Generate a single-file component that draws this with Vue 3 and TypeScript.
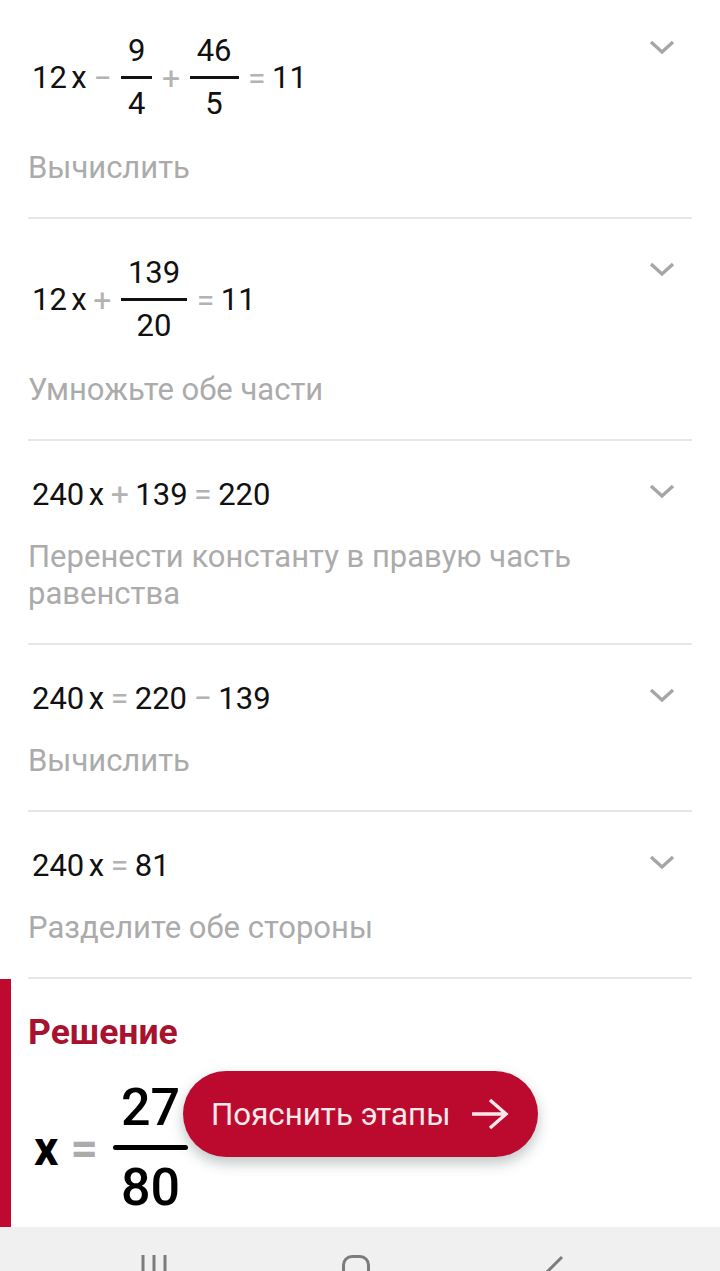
<script setup lang="ts">
type Token =
  | { kind: 'text'; value: string }
  | { kind: 'op'; value: string }
  | { kind: 'frac'; top: string; bottom: string }

interface Step {
  expr: Token[]
  caption: string
}

const text = (value: string): Token => ({ kind: 'text', value })
const op = (value: string): Token => ({ kind: 'op', value })
const frac = (top: string, bottom: string): Token => ({ kind: 'frac', top, bottom })

const steps: Step[] = [
  {
    expr: [text('12'), text('x'), op('−'), frac('9', '4'), op('+'), frac('46', '5'), op('='), text('11')],
    caption: 'Вычислить'
  },
  {
    expr: [text('12'), text('x'), op('+'), frac('139', '20'), op('='), text('11')],
    caption: 'Умножьте обе части'
  },
  {
    expr: [text('240'), text('x'), op('+'), text('139'), op('='), text('220')],
    caption: 'Перенести константу в правую часть равенства'
  },
  {
    expr: [text('240'), text('x'), op('='), text('220'), op('−'), text('139')],
    caption: 'Вычислить'
  },
  {
    expr: [text('240'), text('x'), op('='), text('81')],
    caption: 'Разделите обе стороны'
  }
]
</script>

<template>
  <div class="screen">
    <main class="content">
      <section v-for="(step, i) in steps" :key="i" class="step">
        <div class="step-head">
          <div class="expr">
            <template v-for="(tok, j) in step.expr" :key="j">
              <span v-if="tok.kind === 'text'" class="num">{{ tok.value }}</span>
              <span v-else-if="tok.kind === 'op'" class="op">{{ tok.value }}</span>
              <span v-else class="frac">
                <span class="frac-part">{{ tok.top }}</span>
                <span class="frac-bar"></span>
                <span class="frac-part">{{ tok.bottom }}</span>
              </span>
            </template>
          </div>
          <svg class="chevron" width="26" height="16" viewBox="0 0 26 16" fill="none">
            <path d="M2 3l11 10L24 3" stroke="#a6a6a6" stroke-width="3.4" />
          </svg>
        </div>
        <p class="caption">{{ step.caption }}</p>
      </section>

      <section class="solution">
        <h2 class="solution-title">Решение</h2>
        <div class="answer">
          <span class="answer-var">x</span>
          <span class="answer-eq">=</span>
          <span class="answer-frac">
            <span class="answer-top">27</span>
            <span class="answer-bar"></span>
            <span class="answer-bottom">80</span>
          </span>
        </div>
        <button class="explain" type="button">
          <span>Пояснить этапы</span>
          <svg width="38" height="34" viewBox="0 0 38 34" fill="none">
            <path d="M1 17h34M19 3l16 14-16 14" stroke="#fbe9ec" stroke-width="3.4" />
          </svg>
        </button>
      </section>
    </main>

    <nav class="navbar">
      <svg width="26" height="28" viewBox="0 0 26 28" fill="none">
        <path d="M2 0v28M13 0v28M24 0v28" stroke="#7c7c7c" stroke-width="3" />
      </svg>
      <span class="nav-home"></span>
      <svg width="20" height="34" viewBox="0 0 20 34" fill="none">
        <path d="M17 2L3 16l14 14" stroke="#7c7c7c" stroke-width="3" />
      </svg>
    </nav>
  </div>
</template>

<style>
html,
body {
  margin: 0;
  background: #fff;
}
</style>

<style scoped>
.screen {
  width: 720px;
  height: 1271px;
  overflow: hidden;
  display: flex;
  flex-direction: column;
  font-family: Roboto, "Liberation Sans", sans-serif;
  background: #fff;
}

.content {
  flex: 1;
  min-height: 0;
  margin-top: -3px;
  display: flex;
  flex-direction: column;
}

.step {
  flex: none;
  margin: 0 28px;
  padding: 27px 0 31px;
  border-bottom: 2px solid #e6e6e6;
}

.step-head {
  display: flex;
  justify-content: space-between;
  align-items: flex-start;
}

.expr {
  display: flex;
  align-items: center;
  min-height: 52px;
  padding-left: 4px;
  font-size: 31px;
  color: #111;
}

.num + .num {
  margin-left: 4.5px;
}

.op {
  margin: 0 6.5px;
  color: #b3b3b3;
  font-size: 32px;
}

.frac {
  display: flex;
  flex-direction: column;
  align-items: center;
  margin: 2px 0;
  padding: 0 3px;
}

.frac-part {
  padding: 0 7px;
  line-height: 50px;
}

.frac-bar {
  align-self: stretch;
  height: 3px;
  background: #111;
}

.chevron {
  margin: 15px 17px 0 0;
  flex: none;
}

.caption {
  margin: 18px 0 0;
  font-size: 31px;
  line-height: 37px;
  color: #ababab;
}

.solution {
  flex: 1;
  position: relative;
  border-left: 11px solid #c0092f;
  padding: 34px 0 0 17px;
}

.solution-title {
  margin: 0;
  font-size: 35.5px;
  line-height: 38px;
  font-weight: 700;
  color: #a8122f;
}

.answer {
  display: flex;
  align-items: center;
  margin-top: 20px;
  padding-left: 6px;
  color: #000;
}

.answer-var {
  font-size: 48px;
  font-weight: 700;
}

.answer-eq {
  margin: 0 15px 0 12px;
  font-size: 48px;
  font-weight: 700;
  color: #ababab;
}

.answer-frac {
  display: flex;
  flex-direction: column;
  align-items: center;
  width: 75px;
  font-size: 52px;
  font-weight: 500;
}

.answer-top {
  line-height: 74px;
}

.answer-bottom {
  line-height: 76px;
}

.answer-bar {
  align-self: stretch;
  height: 5px;
  border-radius: 3px;
  background: #000;
}

.explain {
  position: absolute;
  left: 172px;
  top: 92px;
  display: flex;
  align-items: center;
  gap: 21px;
  height: 86px;
  padding: 0 29px 0 28px;
  border: 0;
  border-radius: 43px;
  background: #bc0a2e;
  color: #fbe9ec;
  font: 400 31.3px Roboto, "Liberation Sans", sans-serif;
  box-shadow: 0 6px 14px rgba(40, 60, 60, 0.3);
}

.navbar {
  flex: none;
  height: 44px;
  display: flex;
  justify-content: center;
  gap: 175px;
  padding: 28px 14px 0 0;
  box-sizing: border-box;
  background: #f0f0f0;
  overflow: hidden;
}

.nav-home {
  flex: none;
  width: 28px;
  height: 34px;
  box-sizing: border-box;
  border: 3px solid #7c7c7c;
  border-radius: 10px;
}
</style>
